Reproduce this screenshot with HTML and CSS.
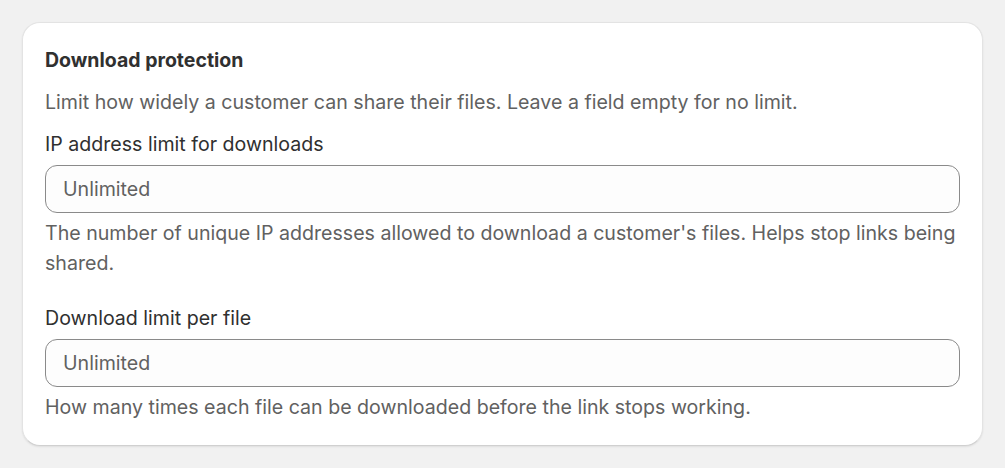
FILE: index.html
```html
<!DOCTYPE html>
<html lang="en">
<head>
    <meta charset="UTF-8">
    <meta name="viewport" content="width=device-width, initial-scale=1.0">
    <title>Download protection</title>
    <link rel="stylesheet" href="styles.css">
</head>
<body>
    <div class="card">
        <h2 class="card-title">Download protection</h2>
        <p class="card-desc">Limit how widely a customer can share their files. Leave a field empty for no limit.</p>

        <div class="field">
            <label for="ipLimit">IP address limit for downloads</label>
            <input id="ipLimit" type="text" placeholder="Unlimited">
            <p class="help">The number of unique IP addresses allowed to download a customer's files. Helps stop links being shared.</p>
        </div>

        <div class="field">
            <label for="fileLimit">Download limit per file</label>
            <input id="fileLimit" type="text" placeholder="Unlimited">
            <p class="help">How many times each file can be downloaded before the link stops working.</p>
        </div>
    </div>
</body>
</html>
```

FILE: styles.css
```css
body {
    font-family: Inter, "Noto Sans", sans-serif;
    margin: 0;
    padding: 22px;
    background-color: #f1f1f1;
    color: #303030;
    font-size: 19.6px;
    line-height: 30px;
}
.card {
    background: #fff;
    border: 1px solid #e3e3e3;
    border-bottom-color: #d0d0d0;
    border-radius: 18px;
    box-shadow: 0 1px 2px rgba(0, 0, 0, 0.08);
    padding: 22px 22px 23px;
}
.card-title {
    margin: 0;
    font-size: 19.5px;
    font-weight: 650;
    line-height: 30px;
    color: #303030;
}
.card-desc {
    margin: 12px 0 0;
    color: #616161;
}
.field {
    margin-top: 12px;
}
.field + .field {
    margin-top: 25px;
}
.field label {
    display: block;
    color: #303030;
}
.field input {
    display: block;
    box-sizing: border-box;
    width: 100%;
    height: 48px;
    margin-top: 6px;
    padding: 0 17px;
    font-family: inherit;
    font-size: 19.6px;
    color: #303030;
    background: #fdfdfd;
    border: 1px solid #8a8a8a;
    border-radius: 12px;
    outline: none;
}
.field input::placeholder {
    color: #616161;
}
.help {
    margin: 5px 0 0;
    color: #616161;
}
```
